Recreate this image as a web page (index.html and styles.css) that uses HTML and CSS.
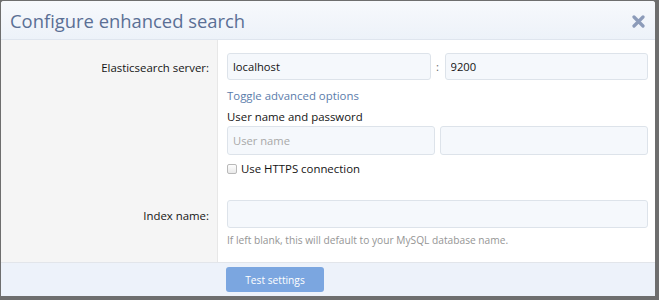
FILE: index.html
```html
<!DOCTYPE html>
<html lang="en">
<head>
  <meta charset="UTF-8" />
  <title>Configure enhanced search</title>
  <link rel="stylesheet" href="styles.css">
</head>
<body>
  <div class="overlay">
    <div class="dialog">
      <div class="dialog-title">
        <h2>Configure enhanced search</h2>
        <span class="close" title="Close">
          <svg width="13" height="13" viewBox="0 0 13 13">
            <path d="M2 2 L11 11 M11 2 L2 11" stroke="#8c9bb9" stroke-width="3.2" stroke-linecap="round" />
          </svg>
        </span>
      </div>

      <div class="dialog-body">
        <div class="row row-server">
          <div class="label">Elasticsearch server:</div>
          <div class="field">
            <div class="server-inputs">
              <input type="text" class="text-input" value="localhost" />
              <span class="colon">:</span>
              <input type="text" class="text-input" value="9200" />
            </div>
            <a class="toggle-link" href="#">Toggle advanced options</a>
            <div class="sub-label">User name and password</div>
            <div class="auth-inputs">
              <input type="text" class="text-input tall" placeholder="User name" />
              <input type="password" class="text-input tall" />
            </div>
            <label class="check">
              <input type="checkbox" />
              <span>Use HTTPS connection</span>
            </label>
          </div>
        </div>

        <div class="row row-index">
          <div class="label">Index name:</div>
          <div class="field">
            <input type="text" class="text-input full" />
            <div class="hint">If left blank, this will default to your MySQL database name.</div>
          </div>
        </div>
      </div>

      <div class="dialog-footer">
        <div class="footer-spacer"></div>
        <div class="footer-buttons">
          <button class="button">Test settings</button>
        </div>
      </div>
    </div>
  </div>
</body>
</html>
```

FILE: styles.css
```css
body {
  margin: 0;
  padding: 0;
  background: #6e6e6e;
  font-family: 'Open Sans', 'Noto Sans', sans-serif;
  font-size: 11.4px;
  color: #141414;
}

.overlay {
  width: 659px;
  height: 300px;
  padding: 1px 0 0 1px;
  box-sizing: border-box;
}

.dialog {
  width: 654px;
  height: 295px;
  background: #fff;
  border-radius: 3px 3px 0 0;
  display: flex;
  flex-direction: column;
  overflow: hidden;
}

.dialog-title {
  height: 38px;
  display: flex;
  align-items: center;
  justify-content: space-between;
  padding: 0 9px 0 9px;
  background: linear-gradient(to bottom, #f7f9fc, #edf2f9);
  border-bottom: 1px solid #dfe5ee;
}

.dialog-title h2 {
  margin: 0;
  font-size: 18.4px;
  font-weight: normal;
  color: #5a6f95;
}

.close {
  display: flex;
  margin-top: 3px;
  margin-right: 1px;
}

.dialog-body {
  flex: 1;
  display: flex;
  flex-direction: column;
  border-bottom: 1px solid #e2e5ea;
}

.row {
  display: flex;
}

.row-index {
  flex: 1;
}

.label {
  width: 217px;
  flex-shrink: 0;
  box-sizing: border-box;
  background: #f5f5f5;
  border-right: 1px solid #e7e7e7;
  text-align: right;
  padding-right: 8px;
  color: #141414;
}

.row-server .label {
  padding-top: 20px;
}

.row-index .label {
  padding-top: 31px;
}

.field {
  flex: 1;
  padding: 0 7px 0 9px;
  display: flex;
  flex-direction: column;
}

.row-server .field {
  padding-top: 13px;
}

.row-index .field {
  padding-top: 23px;
}

.server-inputs {
  display: flex;
  align-items: center;
}

.server-inputs .text-input {
  flex: 1;
  min-width: 0;
}

.colon {
  width: 14px;
  text-align: center;
  color: #6a6a6a;
}

.text-input {
  height: 27px;
  box-sizing: border-box;
  border: 1px solid #dde3ea;
  border-radius: 3px;
  background: #f5f8fc;
  padding: 0 5px;
  font-family: inherit;
  font-size: 11.2px;
  color: #141414;
  outline: none;
}

.text-input.tall {
  height: 29px;
}

.text-input::placeholder {
  color: #a8a8a8;
}

.toggle-link {
  margin-top: 7px;
  color: #5b7cab;
  text-decoration: none;
  line-height: 17px;
}

.sub-label {
  margin-top: 4px;
  line-height: 17px;
}

.auth-inputs {
  display: flex;
  gap: 5px;
  margin-top: 1px;
}

.auth-inputs .text-input {
  flex: 1;
  min-width: 0;
}

.check {
  display: flex;
  align-items: center;
  gap: 4px;
  margin-top: 5px;
  line-height: 17px;
}

/* light square like the original theme's checkbox */
.check input {
  appearance: none;
  margin: 0;
  width: 10px;
  height: 10px;
  border: 1px solid #b9b9b9;
  border-radius: 2px;
  background: linear-gradient(to bottom, #fdfdfd, #e9e9e9);
}

.text-input.full {
  width: 100%;
  height: 28px;
}

.hint {
  margin-top: 5px;
  font-size: 10.2px;
  color: #959595;
}

.dialog-footer {
  height: 33px;
  display: flex;
  background: #edf2fa;
}

.footer-spacer {
  width: 217px;
}

.footer-buttons {
  padding: 4px 0 0 8px;
}

.button {
  width: 98px;
  height: 25px;
  border: none;
  border-radius: 3px;
  background: #7ba6e0;
  color: #fff;
  font-family: inherit;
  font-size: 10.2px;
  padding: 0;
}
```
